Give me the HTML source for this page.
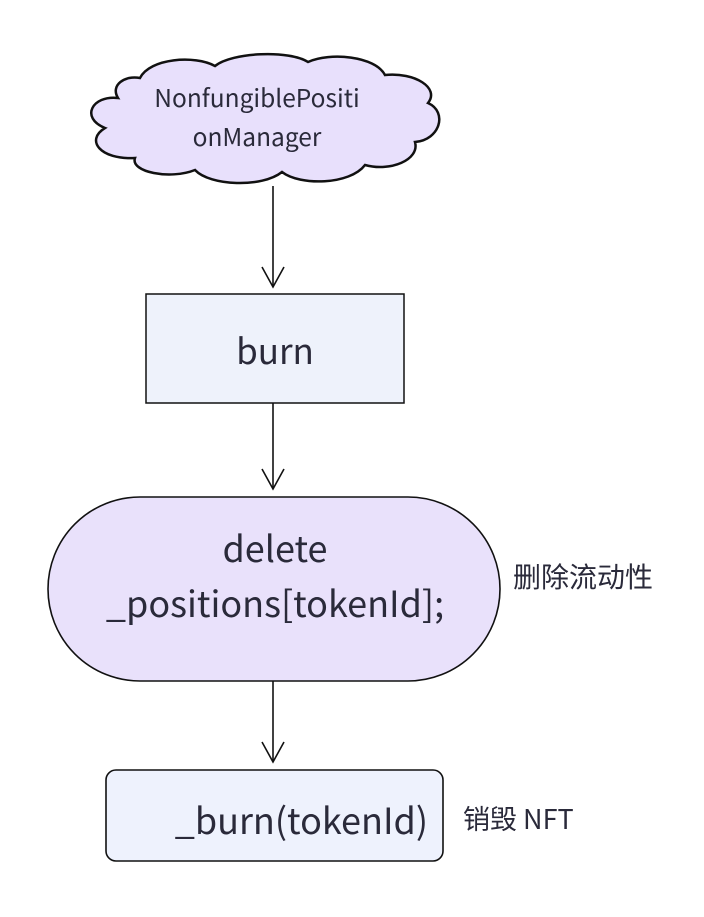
<!DOCTYPE html>
<html><head><meta charset="utf-8"><style>
html,body{margin:0;padding:0;background:#fff;}
svg text{font-family:"Noto Sans CJK SC","Liberation Sans",sans-serif;fill:#2a2a3a;}
</style></head><body>
<svg width="704" height="912" viewBox="0 0 704 912" xmlns="http://www.w3.org/2000/svg">
<path d="M140,78 C150,58 195,55 215,66 C232,52 290,50 308,62 C330,52 375,56 385,75 C415,72 440,88 428,103 C448,112 440,140 415,142 C420,160 390,172 365,165 C350,185 300,186 282,172 C262,188 210,186 195,170 C170,180 130,172 135,158 C100,160 85,140 105,128 C80,118 92,95 118,98 C110,85 125,75 140,78 Z" fill="#e8e0fc" stroke="#111" stroke-width="2.5"/>
<text x="257" y="107" font-size="24.5" text-anchor="middle">NonfungiblePositi</text>
<text x="257" y="146" font-size="24.5" text-anchor="middle">onManager</text>
<g stroke="#111" stroke-width="1.6" fill="none">
<line x1="273" y1="186" x2="273" y2="287"/><path d="M262,267 L273,287 L284,267"/>
<line x1="273" y1="403" x2="273" y2="489"/><path d="M262,469 L273,489 L284,469"/>
<line x1="273" y1="681" x2="273" y2="762"/><path d="M262,742 L273,762 L284,742"/>
</g>
<rect x="146" y="294" width="258" height="109" fill="#eef2fb" stroke="#111" stroke-width="1.5"/>
<text x="275" y="364" font-size="35" text-anchor="middle">burn</text>
<rect x="48" y="497" width="452" height="184" rx="92" fill="#e9e1fb" stroke="#111" stroke-width="1.6"/>
<text x="275" y="562" font-size="36" text-anchor="middle">delete</text>
<text x="275" y="617" font-size="36" text-anchor="middle">_positions[tokenId];</text>
<text x="513" y="587" font-size="28">删除流动性</text>
<rect x="106" y="770" width="337" height="91" rx="10" fill="#eef2fd" stroke="#111" stroke-width="1.6"/>
<text x="428" y="834" font-size="36" text-anchor="end">_burn(tokenId)</text>
<text x="463" y="829" font-size="27">销毁 NFT</text>
</svg>
</body></html>
